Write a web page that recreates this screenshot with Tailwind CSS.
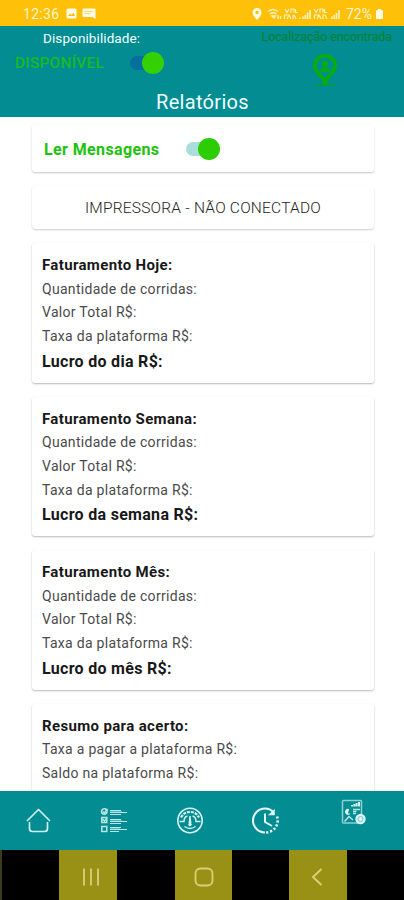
<!DOCTYPE html>
<html lang="pt-BR">
  <head>
    <meta charset="UTF-8" />
    <meta name="viewport" content="width=device-width, initial-scale=1.0" />
    <title>Relatórios</title>
    <!-- Tailwind CSS CDN -->
    <script src="https://cdn.jsdelivr.net/npm/@tailwindcss/browser@4"></script>
  </head>
  <body class="flex h-[900px] w-[404px] flex-col overflow-hidden bg-white font-['Roboto',sans-serif] text-[#222]">
    <!-- Status bar -->
    <div class="flex h-[26px] shrink-0 items-center bg-[#ffc00a] pt-[1px] pr-[20px] pl-[23px] text-[14px] leading-none text-[#fff6d0]">
      <span class="w-[37px] tracking-[0.3px] whitespace-nowrap">12:36</span>
      <svg class="ml-[6px] h-[11px] w-[11px]" viewBox="0 0 11 11">
        <rect x="0.5" y="0.5" width="10" height="10" rx="1.5" fill="#fffbe8" />
        <path d="M2 8l2-2.500 1.500 1.500L7.500 4.500 9 8z" fill="#ffc00a" />
      </svg>
      <svg class="ml-[5px] h-[11px] w-[14px]" viewBox="0 0 14 11">
        <path d="M1.500 0.500h11a1 1 0 0 1 1 1V11L10.500 9H1.500a1 1 0 0 1-1-1V1.500a1 1 0 0 1 1-1z" fill="#fffbe8" />
        <path d="M2.500 3.500h8M2.500 5.500h6" stroke="#ffd863" />
      </svg>
      <div class="ml-auto flex items-center">
        <svg class="h-[12px] w-[10px]" viewBox="0 0 10 12">
          <path fill-rule="evenodd" d="M5 0a4.500 4.500 0 0 1 4.500 4.500C9.500 7.500 5 12 5 12S0.500 7.500 0.500 4.500A4.500 4.500 0 0 1 5 0zm0 2.800a1.700 1.700 0 1 0 0 3.400 1.700 1.700 0 0 0 0-3.400z" fill="#fffbe8" />
        </svg>
        <!-- Wi-Fi and the two SIM signals -->
        <svg class="ml-[5px] h-[14px] w-[74px]" viewBox="0 0 74 14" preserveAspectRatio="none">
          <g fill="none" stroke="#fff0b8" stroke-width="1.400">
            <path d="M1 4.500q5-4 10 0M3 7q3-2.500 6.500 0" />
            <path d="M5 9l2 2 1.500-2z" fill="#fff0b8" />
            <path d="M11 8v4M13.500 12V9" />
            <path d="M18 2l2 3.500L22 2M24 5.500V2h3v3.500M28.500 2v3.500H31" stroke-width="1.200" />
            <path d="M17.500 12V8h4M20 12l2-4 2 4M26 12V8M29 12l-2-4M33 12v-1.500" stroke-width="1.200" />
            <path d="M36 12V9.500M38.300 12V8M40.600 12V5.500M43 12V3" stroke-width="1.700" />
            <path d="M47 2l2 3.500L51 2M53 5.500V2h3v3.500M57.500 2v3.500H60" stroke-width="1.200" />
            <path d="M47.500 12V8h4M50 12l2-4 2 4M56 12V8h2l2 4" stroke-width="1.200" />
            <path d="M65 12V9.500M67.300 12V8M69.600 12V6M72 12V3" stroke-width="1.700" />
          </g>
        </svg>
        <span class="ml-[5px] w-[28px] whitespace-nowrap">72%</span>
        <svg class="ml-[1px] h-[10px] w-[9px]" viewBox="0 0 9 11" preserveAspectRatio="none">
          <path d="M3 0h3v1.500h2V10a1 1 0 0 1-1 1H2a1 1 0 0 1-1-1V1.500h2z" fill="#fffbe8" />
        </svg>
      </div>
    </div>

    <!-- Header -->
    <header class="grid h-[91px] shrink-0 grid-cols-2 grid-rows-[63px_28px] bg-[#038c92]">
      <div class="pt-[4px] pl-[15px]">
        <p class="ml-[28px] text-[13.5px] leading-[16px] tracking-[0.1px] whitespace-nowrap text-[#f2ffff]">Disponibilidade:</p>
        <div class="mt-[5px] flex h-[24px] items-center">
          <span class="w-[115px] pt-[1px] text-[15.5px] leading-none font-medium tracking-[0.2px] whitespace-nowrap text-[#17bb24]">DISPONÍVEL</span>
          <div class="flex h-[14px] w-[34px] items-center justify-end rounded-full bg-linear-to-r from-[#066f9b] from-60% to-transparent to-60%">
            <span class="h-[22px] w-[22px] shrink-0 rounded-full bg-[#35d003]"></span>
          </div>
        </div>
      </div>
      <div class="flex flex-col items-end pt-[4px] pr-[12px]">
        <p class="text-[12.5px] leading-[14px] tracking-[-0.1px] whitespace-nowrap text-[#03822e]">Localização encontrada</p>
        <svg class="mt-[9px] mr-[54px] h-[34px] w-[26px]" viewBox="0 0 26 34">
          <path d="M3 32h20" stroke="#06a31b" stroke-width="1.300" />
          <path d="M13 2.800c5.700 0 10.200 4.200 10.200 9.600 0 6-5.200 9-10.200 15.600C8 21.400 2.800 18.400 2.800 12.400c0-5.400 4.500-9.600 10.200-9.600z" fill="none" stroke="#06ad12" stroke-width="3.800" />
          <circle cx="13" cy="11" r="3.300" fill="#06ad12" />
          <path d="M8.200 19a4.800 4.800 0 0 1 9.600 0z" fill="#06ad12" />
          <path d="M8.500 24h9L15 31.500h-4z" fill="#06ad12" />
        </svg>
      </div>
      <h1 class="col-span-2 pl-[1px] text-center text-[20px] leading-[27px] tracking-[0.3px] text-[#f0ffff]">Relatórios</h1>
    </header>

    <!-- Content -->
    <main class="flex min-h-0 flex-1 flex-col gap-[14px] overflow-hidden pt-[8px] pr-[30px] pl-[32px]">
      <section class="flex h-[47px] shrink-0 items-center rounded-[3px] bg-white pl-[12px] shadow-[0_1px_2px_rgba(0,0,0,0.22)]">
        <span class="w-[142px] pt-[2px] text-[16px] font-bold tracking-[0.38px] whitespace-nowrap text-[#20c20c]">Ler Mensagens</span>
        <div class="flex h-[14px] w-[34px] items-center justify-end rounded-full bg-linear-to-r from-[#a9dedb] from-60% to-transparent to-60%">
          <span class="h-[22px] w-[22px] shrink-0 rounded-full bg-[#2dcd06]"></span>
        </div>
      </section>

      <button class="h-[43px] shrink-0 rounded-[4px] bg-white pt-[2px] text-[15.5px] font-light tracking-[0.22px] shadow-[0_1px_2px_rgba(0,0,0,0.2)]">IMPRESSORA - NÃO CONECTADO</button>

      <section class="h-[139.500px] shrink-0 rounded-[3px] bg-white pt-[11px] pl-[10px] text-[14px] leading-[23.700px] tracking-[0.3px] text-[#4a4a4a] shadow-[0_1px_2px_rgba(0,0,0,0.28)]">
        <h2 class="text-[15px] font-bold tracking-[0.35px] text-[#181818]">Faturamento Hoje:</h2>
        <p>Quantidade de corridas:</p>
        <p>Valor Total R$:</p>
        <p>Taxa da plataforma R$:</p>
        <p class="text-[16px] leading-[26px] font-bold text-[#181818]">Lucro do dia R$:</p>
      </section>

      <section class="h-[139.500px] shrink-0 rounded-[3px] bg-white pt-[11px] pl-[10px] text-[14px] leading-[23.700px] tracking-[0.3px] text-[#4a4a4a] shadow-[0_1px_2px_rgba(0,0,0,0.28)]">
        <h2 class="text-[15px] font-bold tracking-[0.35px] text-[#181818]">Faturamento Semana:</h2>
        <p>Quantidade de corridas:</p>
        <p>Valor Total R$:</p>
        <p>Taxa da plataforma R$:</p>
        <p class="text-[16px] leading-[26px] font-bold text-[#181818]">Lucro da semana R$:</p>
      </section>

      <section class="h-[139.500px] shrink-0 rounded-[3px] bg-white pt-[11px] pl-[10px] text-[14px] leading-[23.700px] tracking-[0.3px] text-[#4a4a4a] shadow-[0_1px_2px_rgba(0,0,0,0.28)]">
        <h2 class="text-[15px] font-bold tracking-[0.35px] text-[#181818]">Faturamento Mês:</h2>
        <p>Quantidade de corridas:</p>
        <p>Valor Total R$:</p>
        <p>Taxa da plataforma R$:</p>
        <p class="text-[16px] leading-[26px] font-bold text-[#181818]">Lucro do mês R$:</p>
      </section>

      <section class="h-[139.500px] shrink-0 rounded-[3px] bg-white pt-[11px] pl-[10px] text-[14px] leading-[23.700px] tracking-[0.3px] text-[#4a4a4a] shadow-[0_1px_2px_rgba(0,0,0,0.28)]">
        <h2 class="text-[15px] font-bold tracking-[0.35px] text-[#181818]">Resumo para acerto:</h2>
        <p>Taxa a pagar a plataforma R$:</p>
        <p>Saldo na plataforma R$:</p>
      </section>
    </main>

    <!-- Bottom navigation -->
    <nav class="flex h-[59px] shrink-0 items-start bg-[#038c92] pt-[8px] pl-[26px]">
      <svg class="mt-[8px] h-[26px] w-[26px]" viewBox="0 0 26 26" fill="none" stroke="#c9f0f0" stroke-width="1.700" stroke-linecap="round" stroke-linejoin="round">
        <path d="M1.500 13.500L12.500 2.500l11 11" />
        <path d="M3.500 15.500v6a3 3 0 0 0 3 3h12a3 3 0 0 0 3-3v-6" />
      </svg>
      <svg class="mt-[8px] ml-[48px] h-[28px] w-[28px]" viewBox="0 0 28 28" fill="none" stroke="#b9e5e7" stroke-width="1.500">
        <circle cx="4.300" cy="4.500" r="2.700" />
        <path d="M3 4.500l1.500 1.500 3-4" />
        <path d="M1.800 10.500h5v5h-5zM2.500 12l2 2 3-3.500" />
        <rect x="1.800" y="19.500" width="5" height="5" />
        <path d="M10 3.500h11M10 5.500h17M10 7.500h11M10 12.500h11M10 14.500h17M10 16.500h11M10 20.500h11M10 22.500h17M10 24.500h9" stroke-width="1" />
        <path d="M10 5h12M10 14h12M10 22h10" stroke-width="2" stroke-opacity="0.45" />
      </svg>
      <svg class="mt-[8px] ml-[48px] h-[28px] w-[28px]" viewBox="0 0 28 28" fill="none" stroke="#d8f5f5" stroke-width="1.600">
        <circle cx="14" cy="13.500" r="12.200" />
        <path d="M3.500 14.500h4.500c0-3 1-5 3.500-5.500M24.500 14.500h-4.500c0-3-1-5-3.500-5.500" stroke-width="1.400" />
        <path d="M5 10.500c3-5 6-5.500 9-5.500s6 0.500 9 5.500" stroke-width="2.200" stroke-dasharray="3 1" />
        <path d="M14 9l-1 7h2z" fill="#d8f5f5" stroke-width="1" />
        <circle cx="14" cy="17.500" r="1.700" fill="#d8f5f5" stroke="none" />
        <path d="M8.500 19.500q5.500 4 11 0" stroke-width="1.500" />
      </svg>
      <svg class="mt-[8px] ml-[48px] h-[28px] w-[28px]" viewBox="0 0 28 28" fill="none" stroke="#e3fafa">
        <path d="M21.500 5A12 12 0 1 0 13 25.500" stroke-width="2" />
        <path d="M22.500 2.500v5.500h-6z" fill="#e3fafa" stroke-width="0.500" />
        <path d="M25 9.500A12 12 0 0 1 13 25.500" stroke-width="2.600" stroke-dasharray="2.200 1.800" />
        <path d="M13 6.500v8.500l7 4" stroke-width="2" />
      </svg>
      <svg class="ml-[60px] h-[26px] w-[28px]" viewBox="0 0 28 26" fill="none" stroke="#b5e3e5">
        <rect x="2.500" y="1.500" width="19" height="22.500" rx="1" stroke-width="1.500" stroke="#8fd0d3" />
        <path d="M12 7.500V6M14.300 7.500V5M16.600 7.500V4M19 7.500V3" stroke-width="2" stroke="#d9f5f5" />
        <path d="M9 10a3 3 0 1 0 1.500 4.500H8z" fill="#d9f5f5" stroke="none" />
        <path d="M13 10.500h7M13 12.500h3.500M13 14.500h3M4.500 22.500l4.500-5 4 3.500" stroke-width="1.500" />
        <circle cx="20.500" cy="20" r="5.200" fill="#d9f5f5" stroke="none" />
        <circle cx="20.500" cy="20" r="2.500" fill="#d9f5f5" stroke="#7cc5c9" stroke-width="1" />
      </svg>
    </nav>

    <!-- System buttons -->
    <div class="flex h-[50px] shrink-0 bg-black text-[#ddcf7a]">
      <div class="w-[2px] bg-[#3c3b16]"></div>
      <div class="w-[57px]"></div>
      <div class="flex w-[58px] items-center justify-center bg-[#999116]">
        <svg class="mt-[3px] ml-[8px] h-[20px] w-[20px]" viewBox="0 0 20 20" fill="none" stroke="currentColor" stroke-width="1.800">
          <path d="M2 1.500v17M9 1.500v17M16 1.500v17" />
        </svg>
      </div>
      <div class="w-[58px]"></div>
      <div class="flex w-[57px] items-center justify-center bg-[#999116]">
        <svg class="mt-[3px] h-[20px] w-[20px]" viewBox="0 0 20 20" fill="none" stroke="currentColor" stroke-width="1.800">
          <rect x="1.500" y="1.500" width="17" height="17" rx="5" />
        </svg>
      </div>
      <div class="w-[57px]"></div>
      <div class="flex w-[58px] items-center justify-center bg-[#999116]">
        <svg class="mt-[3px] mr-[2px] h-[20px] w-[12px]" viewBox="0 0 12 20" fill="none" stroke="currentColor" stroke-width="1.900">
          <path d="M10.500 2L2 10l8.500 8" />
        </svg>
      </div>
    </div>
  </body>
</html>
